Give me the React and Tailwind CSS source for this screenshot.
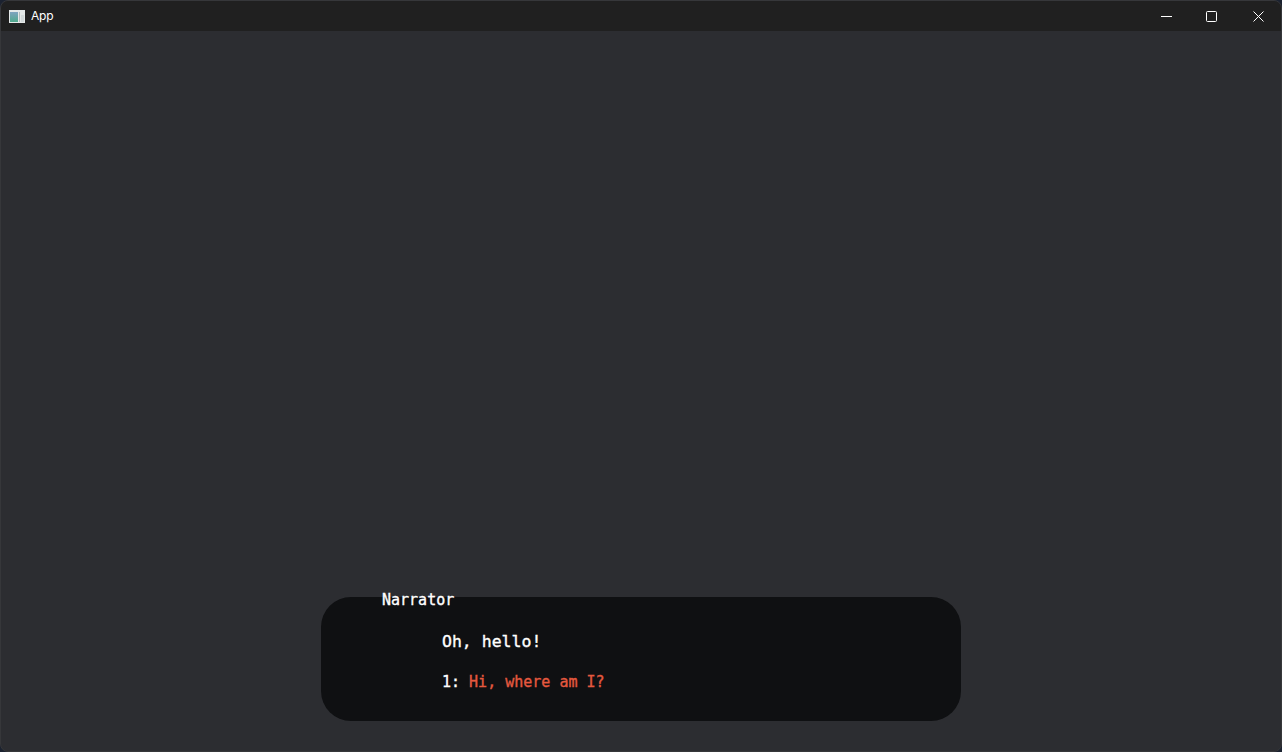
import React from 'react';

const mono = { fontFamily: '"DejaVu Sans Mono", monospace' };

const AppIcon = () => (
  <svg width="16" height="13" viewBox="0 0 16 13" className="shrink-0">
    <defs>
      <linearGradient id="pane" x1="0" y1="0" x2="0" y2="1">
        <stop offset="0" stopColor="#7fa3c0" />
        <stop offset="1" stopColor="#4fa98c" />
      </linearGradient>
    </defs>
    <rect x="0" y="0" width="16" height="13" fill="#e4e8e8" />
    <rect x="1" y="2" width="8" height="10" fill="url(#pane)" />
    <rect x="10" y="2" width="1" height="10" fill="#b4bec0" />
    <rect x="12" y="5" width="3" height="7" fill="#d2d9da" />
  </svg>
);

const TitleBar = () => (
  <div className="h-[30px] shrink-0 flex items-center bg-[#202020] pl-[8px]">
    <AppIcon />
    <span className="ml-[6px] text-[12px] text-white font-['Inter',sans-serif] tracking-[-0.2px]">App</span>
    <div className="ml-auto flex items-center h-full">
      <button className="w-[46px] h-full flex items-center justify-center">
        <svg width="11" height="11" viewBox="0 0 11 11"><path d="M0 5.5H11" stroke="#fff" strokeWidth="1" /></svg>
      </button>
      <button className="w-[46px] h-full flex items-center justify-center pr-[1px]">
        <svg width="11" height="11" viewBox="0 0 11 11"><rect x="0.5" y="0.5" width="10" height="10" rx="1" fill="none" stroke="#fff" strokeWidth="1" /></svg>
      </button>
      <button className="w-[46px] h-full flex items-center justify-center">
        <svg width="11" height="11" viewBox="0 0 11 11"><path d="M0.5 0.5L10.5 10.5M10.5 0.5L0.5 10.5" stroke="#fff" strokeWidth="1" /></svg>
      </button>
    </div>
  </div>
);

export default function App() {
  return (
    <div className="w-[1282px] h-[752px] bg-[#1b2230] overflow-hidden">
      <div className="w-full h-full rounded-[8px] overflow-hidden flex flex-col border border-[#36373a] bg-[#2c2d31]">
        <TitleBar />
        <div className="flex-1 flex flex-col items-center justify-end pb-[30px]" style={mono}>
          <div className="w-[640px] h-[124px] rounded-[30px] bg-[#0f1012] text-white [-webkit-text-stroke:0.35px]">
            <div className="ml-[61px] mt-[-7px] text-[15px] leading-[20px]">Narrator</div>
            <div className="ml-[121px] mt-[20px] text-[16.5px] leading-[24px]">Oh, hello!</div>
            <div className="ml-[121px] mt-[18px] text-[15px] leading-[20px]">
              1: <span className="text-[#e5593f]">Hi, where am I?</span>
            </div>
          </div>
        </div>
      </div>
    </div>
  );
}
